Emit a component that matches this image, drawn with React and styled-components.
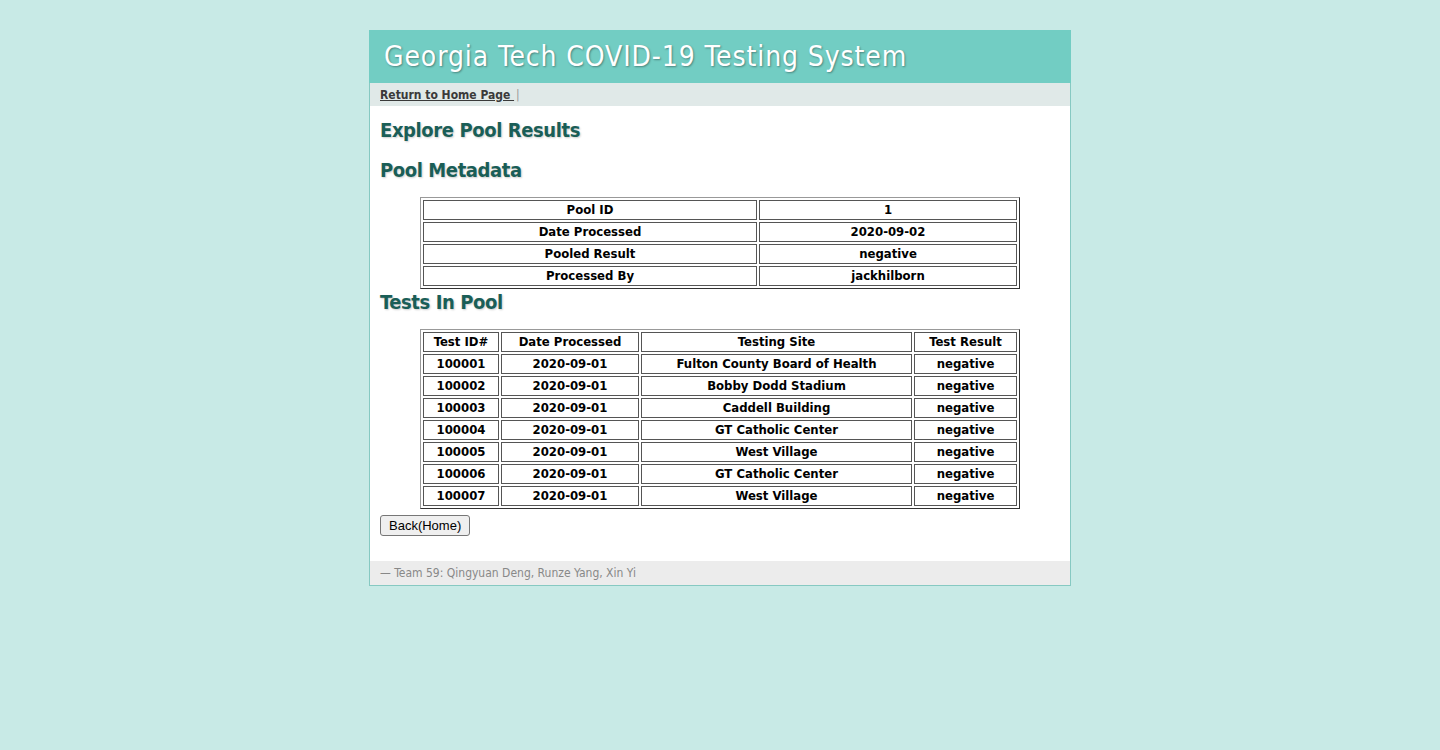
import React from 'react'
import styled, { createGlobalStyle } from 'styled-components'

const GlobalStyle = createGlobalStyle`
  body {
    margin: 0;
    background: #c8eae6;
    font-family: Tahoma, "DejaVu Sans Condensed", "DejaVu Sans", sans-serif;
  }
`

const metadata = [
  ['Pool ID', '1'],
  ['Date Processed', '2020-09-02'],
  ['Pooled Result', 'negative'],
  ['Processed By', 'jackhilborn'],
]

const tests = [
  ['100001', '2020-09-01', 'Fulton County Board of Health', 'negative'],
  ['100002', '2020-09-01', 'Bobby Dodd Stadium', 'negative'],
  ['100003', '2020-09-01', 'Caddell Building', 'negative'],
  ['100004', '2020-09-01', 'GT Catholic Center', 'negative'],
  ['100005', '2020-09-01', 'West Village', 'negative'],
  ['100006', '2020-09-01', 'GT Catholic Center', 'negative'],
  ['100007', '2020-09-01', 'West Village', 'negative'],
]

function App() {
  return (
    <>
      <GlobalStyle />
      <Page>
        <Container>
          <Header>Georgia Tech COVID-19 Testing System</Header>
          <NavBar>
            <NavLink href="#">Return to Home Page </NavLink>
            <Divider>|</Divider>
          </NavBar>
          <Content>
            <Heading first>Explore Pool Results</Heading>
            <Heading>Pool Metadata</Heading>
            <DataTable>
              <colgroup>
                <col style={{ width: 334 }} />
                <col />
              </colgroup>
              <tbody>
                {metadata.map(([label, value]) => (
                  <tr key={label}>
                    <Cell>{label}</Cell>
                    <Cell>{value}</Cell>
                  </tr>
                ))}
              </tbody>
            </DataTable>
            <Heading flush>Tests In Pool</Heading>
            <DataTable>
              <colgroup>
                <col style={{ width: 76 }} />
                <col style={{ width: 138 }} />
                <col style={{ width: 271 }} />
                <col />
              </colgroup>
              <tbody>
                <tr>
                  <Cell>Test ID#</Cell>
                  <Cell>Date Processed</Cell>
                  <Cell>Testing Site</Cell>
                  <Cell>Test Result</Cell>
                </tr>
                {tests.map((row) => (
                  <tr key={row[0]}>
                    {row.map((v, i) => (
                      <Cell key={i}>{v}</Cell>
                    ))}
                  </tr>
                ))}
              </tbody>
            </DataTable>
            <BackButton type="button">Back(Home)</BackButton>
          </Content>
          <Footer>— Team 59: Qingyuan Deng, Runze Yang, Xin Yi</Footer>
        </Container>
      </Page>
    </>
  )
}

const Page = styled.div`
  min-height: 750px;
  padding-top: 30px;
  box-sizing: border-box;
`

const Container = styled.div`
  width: 700px;
  margin: 0 auto;
  background: #fff;
  border: 1px solid #86c9c2;
  border-top: none;
`

const Header = styled.h1`
  margin: 0 -1px;
  height: 53px;
  padding: 0 15px;
  display: flex;
  align-items: center;
  background: #72cdc3;
  color: #fff;
  font-size: 28px;
  letter-spacing: 0.9px;
  font-weight: normal;
  text-shadow: 1px 1px 2px rgba(0, 0, 0, 0.35);
  box-sizing: border-box;
`

const NavBar = styled.div`
  height: 23px;
  background: #e0e9e8;
  padding: 0 10px;
  display: flex;
  align-items: center;
  font-size: 12px;
`

const NavLink = styled.a`
  color: #3a3a3a;
  font-weight: bold;
  white-space: pre;
`

const Divider = styled.span`
  color: #999;
  margin-left: 2px;
`

const Content = styled.div`
  padding: 0 10px 25px;
`

const Heading = styled.h2`
  margin: ${(p) => (p.first ? '11px' : p.flush ? '0' : '14px')} 0 14px;
  font-size: 20px;
  letter-spacing: -0.4px;
  line-height: 26px;
  color: #1a5e57;
  text-shadow: 1px 1px 2px rgba(0, 0, 0, 0.2);
`

const DataTable = styled.table`
  width: 600px;
  margin-left: 40px;
  border-collapse: separate;
  border-spacing: 2px;
  border: 1px solid;
  border-color: #999 #333 #333 #999;
  table-layout: fixed;
`

const Cell = styled.td`
  border: 1px solid #555;
  padding: 1px 2px;
  height: 16px;
  line-height: 16px;
  font-size: 13px;
  font-weight: bold;
  text-align: center;
  color: #000;
  white-space: nowrap;
`

const BackButton = styled.button`
  display: block;
  margin-top: 6px;
  height: 21px;
  padding: 0 8px;
  font-family: "Liberation Sans", Arial, sans-serif;
  font-size: 13px;
  background: #efefef;
  border: 1px solid #767676;
  border-radius: 3px;
  color: #000;
`

const Footer = styled.div`
  height: 24px;
  background: #ececec;
  padding: 0 10px;
  display: flex;
  align-items: center;
  font-size: 12px;
  color: #888;
`

export default App
